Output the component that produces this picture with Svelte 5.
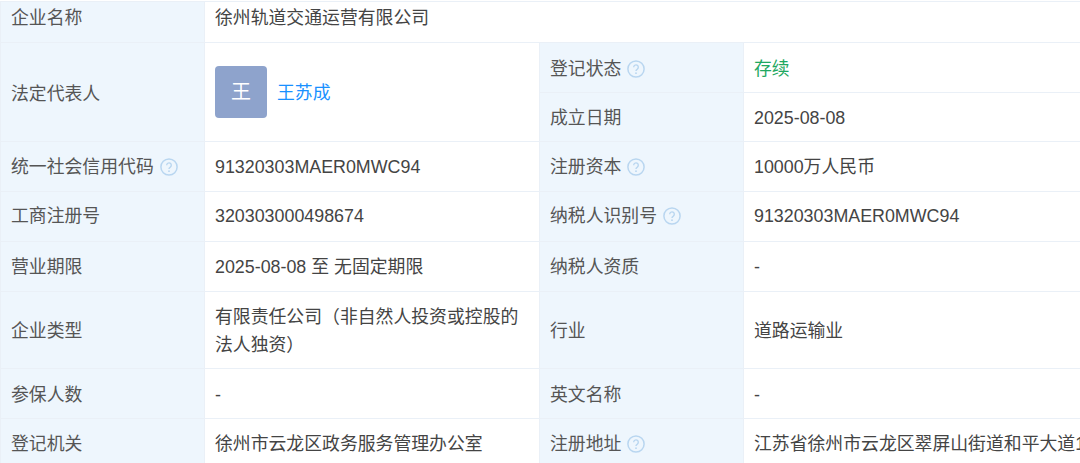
<div class="page">
  <table>
    <colgroup>
      <col class="c1" />
      <col class="c2" />
      <col class="c3" />
      <col class="c4" />
    </colgroup>
    <tbody>
      <tr class="r-name">
        <th>企业名称</th>
        <td colspan="3">徐州轨道交通运营有限公司</td>
      </tr>
      <tr class="r-half">
        <th rowspan="2" class="low2">法定代表人</th>
        <td rowspan="2">
          <div class="person">
            <span class="avatar">王</span>
            <span class="link">王苏成</span>
          </div>
        </td>
        <th class="low2">登记状态{@render help()}</th>
        <td class="ok low2">存续</td>
      </tr>
      <tr class="r-half low">
        <th>成立日期</th>
        <td>2025-08-08</td>
      </tr>
      <tr>
        <th>统一社会信用代码{@render help()}</th>
        <td>91320303MAER0MWC94</td>
        <th>注册资本{@render help()}</th>
        <td>10000万人民币</td>
      </tr>
      <tr class="high">
        <th>工商注册号</th>
        <td>320303000498674</td>
        <th>纳税人识别号{@render help()}</th>
        <td>91320303MAER0MWC94</td>
      </tr>
      <tr>
        <th>营业期限</th>
        <td>2025-08-08 至 无固定期限</td>
        <th>纳税人资质</th>
        <td>-</td>
      </tr>
      <tr class="r-tall low">
        <th>企业类型</th>
        <td>有限责任公司（非自然人投资或控股的法人独资）</td>
        <th>行业</th>
        <td>道路运输业</td>
      </tr>
      <tr class="low">
        <th>参保人数</th>
        <td>-</td>
        <th>英文名称</th>
        <td>-</td>
      </tr>
      <tr>
        <th>登记机关</th>
        <td>徐州市云龙区政务服务管理办公室</td>
        <th>注册地址{@render help()}</th>
        <td class="clip">江苏省徐州市云龙区翠屏山街道和平大道1</td>
      </tr>
    </tbody>
  </table>
</div>

{#snippet help()}
  <svg class="help" width="18" height="18" viewBox="0 0 18 18" fill="none">
    <circle cx="9" cy="9" r="8.1" stroke="#b9d6f0" stroke-width="1.5" />
    <path d="M6.7 7.2a2.3 2.3 0 1 1 3.6 1.9c-.8.5-1.3 1-1.3 2" stroke="#b9d6f0" stroke-width="1.4" />
    <circle cx="9" cy="13.2" r=".9" fill="#b9d6f0" />
  </svg>
{/snippet}

<style>
  :global(body) {
    margin: 0;
    background: #fff;
  }

  .page {
    width: 1080px;
    height: 463px;
    overflow: hidden;
    padding-top: 1px;
    box-sizing: border-box;
    font-family: "Liberation Sans", "Noto Sans CJK SC", sans-serif;
    font-size: 17.85px;
    color: #555;
  }

  table {
    width: 1200px;
    table-layout: fixed;
    border-collapse: collapse;
  }

  .c1 { width: 204px; }
  .c2 { width: 335px; }
  .c3 { width: 204px; }
  .c4 { width: 457px; }

  tr { height: 50px; }
  .r-name { height: 41px; }
  .r-half { height: 49.5px; }
  .r-tall { height: 77px; }

  th, td {
    padding: 0 10px;
    border: 1px solid #eaf0f7;
    text-align: left;
    font-weight: 400;
    line-height: 28px;
    vertical-align: middle;
  }

  th {
    background: #eef6fd;
    color: #555;
  }

  td {
    background: #fff;
    color: #444;
  }

  .r-name th, .r-name td {
    padding-bottom: 8px;
  }

  /* small vertical nudges, text doesn't sit dead centre in every row */
  .low th, .low td { padding-top: 2px; }
  .high th, .high td { padding-bottom: 2px; }
  .low2 { padding-top: 4px; }

  .ok { color: #1fa862; }
  .clip { white-space: nowrap; overflow: hidden; }

  .person {
    display: flex;
    align-items: center;
    gap: 10px;
  }

  .avatar {
    width: 52px;
    height: 52px;
    border-radius: 4px;
    background: #8ea3cc;
    color: #fff;
    font-size: 20px;
    display: flex;
    align-items: center;
    justify-content: center;
  }

  .link {
    color: #1890ff;
    padding-top: 2px;
  }

  .help {
    margin-left: 6px;
    vertical-align: -3px;
  }
</style>
